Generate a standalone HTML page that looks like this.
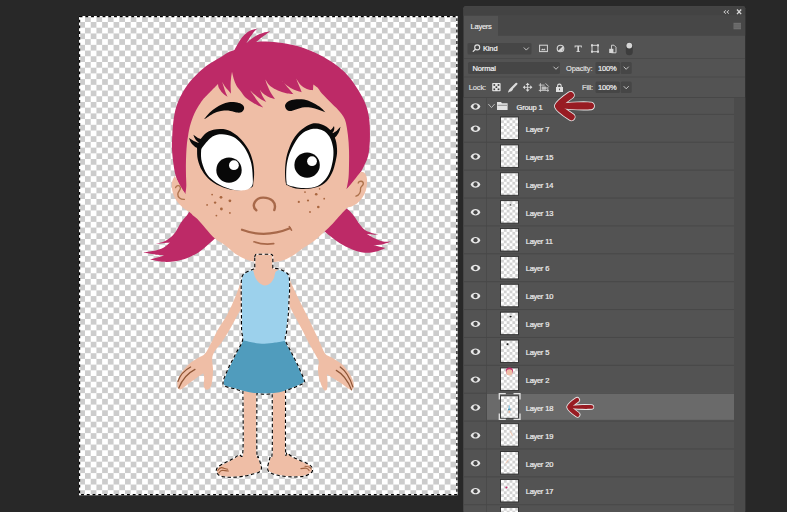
<!DOCTYPE html>
<html><head><meta charset="utf-8">
<style>
html,body{margin:0;padding:0;background:#282828;width:787px;height:512px;overflow:hidden}
svg{display:block}
.t{font-family:"Liberation Sans",sans-serif;stroke:currentColor;stroke-width:0.22px}
</style></head><body>
<svg width="787" height="512" viewBox="0 0 787 512">
<defs>
<pattern id="chk" x="79.3" y="16.3" width="11.42" height="11.42" patternUnits="userSpaceOnUse">
<rect width="11.42" height="11.42" fill="#fff"/>
<rect x="5.71" y="0" width="5.71" height="5.71" fill="#cccccc"/>
<rect x="0" y="5.71" width="5.71" height="5.71" fill="#cccccc"/>
</pattern>
<pattern id="tchk" x="500.5" y="1" width="6.8" height="6.8" patternUnits="userSpaceOnUse">
<rect width="6.8" height="6.8" fill="#fff"/>
<rect x="3.4" width="3.4" height="3.4" fill="#d4d4d4"/>
<rect y="3.4" width="3.4" height="3.4" fill="#d4d4d4"/>
</pattern>
</defs>
<rect width="787" height="512" fill="#282828"/>
<rect x="79" y="16" width="378.5" height="479" fill="url(#chk)"/>
<rect x="79.6" y="16.6" width="377.3" height="478.1" fill="none" stroke="#fff" stroke-width="1.2"/>
<rect x="79.6" y="16.6" width="377.3" height="478.1" fill="none" stroke="#000" stroke-width="1.2" stroke-dasharray="2.87 2.87"/>

<path d="M191.50,212.00 C188.47,210.92 188.55,213.73 186.80,215.50 C185.05,217.27 182.75,220.05 181.00,222.60 C179.25,225.15 177.87,228.47 176.30,230.80 C174.73,233.13 173.55,234.85 171.60,236.60 C169.65,238.35 167.33,240.03 164.60,241.30 C161.87,242.57 156.77,243.72 155.20,244.20 C157.65,243.92 167.45,242.78 169.90,242.50 C168.82,243.37 166.05,246.33 163.40,247.70 C160.75,249.07 157.32,249.92 154.00,250.70 C150.68,251.48 145.25,252.12 143.50,252.40 C145.85,252.80 154.18,254.30 157.60,254.80 C161.02,255.30 162.93,255.30 164.00,255.40 C162.73,255.78 158.73,257.03 156.40,257.70 C154.07,258.37 151.07,259.12 150.00,259.40 C152.23,259.80 159.22,261.50 163.40,261.80 C167.58,262.10 171.20,261.78 175.10,261.20 C179.00,260.62 182.90,259.77 186.80,258.30 C190.70,256.83 194.98,254.65 198.50,252.40 C202.02,250.15 204.98,247.28 207.90,244.80 C210.82,242.32 214.65,238.72 216.00,237.50 C214.17,234.92 206.83,224.58 205.00,222.00 C202.75,220.33 194.53,213.08 191.50,212.00Z" fill="#bd2a67"/>
<path d="M344.60,207.00 C345.57,207.78 348.65,209.93 350.40,211.70 C352.15,213.47 353.53,215.45 355.10,217.60 C356.67,219.75 358.03,222.47 359.80,224.60 C361.57,226.73 362.58,228.65 365.70,230.40 C368.82,232.15 376.37,234.32 378.50,235.10 C376.55,234.92 368.75,234.18 366.80,234.00 C368.17,234.77 372.27,237.33 375.00,238.60 C377.73,239.87 380.47,241.10 383.20,241.60 C385.93,242.10 390.03,241.60 391.40,241.60 C389.85,242.08 385.12,243.92 382.10,244.50 C379.08,245.08 374.77,245.00 373.30,245.10 C374.37,245.38 377.65,246.32 379.70,246.80 C381.75,247.28 384.62,247.80 385.60,248.00 C384.03,248.58 379.72,250.72 376.20,251.50 C372.68,252.28 368.60,253.08 364.50,252.70 C360.40,252.32 355.70,250.77 351.60,249.20 C347.50,247.63 343.42,245.45 339.90,243.30 C336.38,241.15 333.23,238.43 330.50,236.30 C327.77,234.17 324.67,231.47 323.50,230.50 C325.42,227.92 333.08,217.58 335.00,215.00 C336.60,213.67 343.00,208.33 344.60,207.00Z" fill="#bd2a67"/>
<path d="M185.40,194.00 C184.50,192.75 181.61,189.54 180.00,186.50 C178.39,183.46 176.82,179.33 175.75,175.75 C174.68,172.17 174.22,169.29 173.60,165.00 C172.97,160.71 172.25,154.33 172.00,150.00 C171.75,145.67 171.88,143.67 172.10,139.00 C172.32,134.33 172.57,127.50 173.30,122.00 C174.03,116.50 174.76,111.23 176.50,106.00 C178.24,100.77 180.98,95.25 183.75,90.60 C186.52,85.95 189.46,82.13 193.10,78.10 C196.74,74.07 201.17,69.78 205.60,66.40 C210.03,63.02 215.97,60.12 219.70,57.80 C223.43,55.48 225.55,53.80 228.00,52.50 C230.45,51.20 233.33,50.42 234.40,50.00 C234.82,49.27 235.95,47.28 236.90,45.60 C237.85,43.92 238.83,41.70 240.10,39.90 C241.37,38.10 242.92,36.28 244.50,34.80 C246.08,33.32 247.43,32.07 249.60,31.00 C251.77,29.93 256.18,28.83 257.50,28.40 C257.03,28.83 255.80,29.72 254.70,31.00 C253.60,32.28 252.28,34.08 250.90,36.10 C249.52,38.12 247.15,41.93 246.40,43.10 C247.15,42.45 249.20,40.48 250.90,39.20 C252.60,37.92 254.60,36.45 256.60,35.40 C258.60,34.35 260.63,33.58 262.90,32.90 C265.17,32.22 268.98,31.57 270.20,31.30 C269.42,31.88 267.03,33.68 265.50,34.80 C263.97,35.92 262.53,36.78 261.00,38.00 C259.47,39.22 257.08,41.42 256.30,42.10 C257.40,42.00 259.28,41.45 262.90,41.50 C266.52,41.55 272.55,41.72 278.00,42.40 C283.45,43.08 290.06,44.15 295.60,45.60 C301.14,47.05 306.03,48.88 311.25,51.10 C316.47,53.32 322.21,56.17 326.90,58.90 C331.59,61.63 335.50,64.25 339.40,67.50 C343.30,70.75 346.92,74.23 350.30,78.40 C353.68,82.57 357.10,88.07 359.70,92.50 C362.30,96.93 364.30,100.50 365.90,105.00 C367.50,109.50 368.63,113.83 369.30,119.50 C369.97,125.17 370.05,133.13 369.90,139.00 C369.75,144.87 369.38,150.20 368.40,154.70 C367.42,159.20 365.90,162.12 364.00,166.00 C362.10,169.88 359.92,174.07 357.00,178.00 C354.08,181.93 348.25,187.67 346.50,189.60 C338.75,191.33 307.75,198.27 300.00,200.00 C290.00,200.00 250.00,200.00 240.00,200.00 C230.90,199.00 194.50,195.00 185.40,194.00Z" fill="#bd2a67"/>
<path d="M244.00,272.00 C243.73,272.92 243.72,273.67 242.40,277.50 C241.08,281.33 238.62,288.83 236.10,295.00 C233.58,301.17 230.37,308.67 227.30,314.50 C224.23,320.33 220.48,325.07 217.70,330.00 C214.92,334.93 212.68,340.20 210.60,344.10 C208.52,348.00 207.23,351.13 205.20,353.40 C203.17,355.67 200.68,356.25 198.40,357.70 C196.12,359.15 193.78,360.32 191.50,362.10 C189.22,363.88 186.65,366.20 184.70,368.40 C182.75,370.60 181.02,373.02 179.80,375.30 C178.58,377.58 177.72,379.98 177.40,382.10 C177.08,384.22 177.33,386.78 177.90,388.00 C178.47,389.22 179.50,389.73 180.80,389.40 C182.10,389.07 183.92,387.30 185.70,386.00 C187.48,384.70 189.55,383.07 191.50,381.60 C193.45,380.13 195.43,378.58 197.40,377.20 C199.37,375.82 202.32,373.95 203.30,373.30 C203.45,374.12 204.13,376.25 204.20,378.20 C204.27,380.15 203.53,383.20 203.70,385.00 C203.87,386.80 204.47,388.27 205.20,389.00 C205.93,389.73 207.12,389.90 208.10,389.40 C209.08,388.90 210.37,387.87 211.10,386.00 C211.83,384.13 212.18,380.97 212.50,378.20 C212.82,375.43 213.05,372.75 213.00,369.40 C212.95,366.05 211.82,361.28 212.20,358.10 C212.58,354.92 213.73,352.90 215.30,350.30 C216.87,347.70 219.25,345.88 221.60,342.50 C223.95,339.12 227.42,333.33 229.40,330.00 C231.38,326.67 231.40,326.38 233.50,322.50 C235.60,318.62 240.25,310.45 242.00,306.70 C243.75,302.95 243.67,301.12 244.00,300.00 C244.00,295.33 244.00,276.67 244.00,272.00Z" fill="#efbea6"/>
<path d="M287.00,272.00 C287.50,273.33 288.38,276.17 290.00,280.00 C291.62,283.83 293.95,289.25 296.70,295.00 C299.45,300.75 303.62,308.67 306.50,314.50 C309.38,320.33 311.83,325.47 314.00,330.00 C316.17,334.53 317.67,337.80 319.50,341.70 C321.33,345.60 323.04,350.80 325.00,353.40 C326.96,356.00 328.75,355.73 331.25,357.30 C333.75,358.87 337.86,361.27 340.00,362.80 C342.14,364.33 342.43,364.58 344.10,366.50 C345.77,368.42 348.45,371.70 350.00,374.30 C351.55,376.90 352.83,379.82 353.40,382.10 C353.97,384.38 353.80,386.70 353.40,388.00 C353.00,389.30 352.22,390.07 351.00,389.90 C349.78,389.73 348.06,388.30 346.10,387.00 C344.14,385.70 341.70,383.73 339.25,382.10 C336.80,380.47 333.44,378.50 331.40,377.20 C329.36,375.90 327.73,374.78 327.00,374.30 C327.08,375.60 327.50,379.65 327.50,382.10 C327.50,384.55 327.48,387.62 327.00,389.00 C326.52,390.38 325.48,390.90 324.60,390.40 C323.72,389.90 322.68,388.36 321.70,386.00 C320.72,383.64 319.32,379.25 318.70,376.25 C318.08,373.25 317.99,370.50 318.00,368.00 C318.01,365.50 319.15,363.42 318.75,361.25 C318.35,359.08 317.16,357.86 315.60,355.00 C314.04,352.14 311.62,348.27 309.40,344.10 C307.18,339.93 304.25,333.78 302.30,330.00 C300.35,326.22 299.77,325.28 297.70,321.40 C295.63,317.52 291.52,310.27 289.90,306.70 C288.28,303.13 288.32,301.12 288.00,300.00 C287.83,295.33 287.17,276.67 287.00,272.00Z" fill="#efbea6"/>
<path d="M243.30,385.00 C245.50,385.00 254.30,385.00 256.50,385.00 C256.55,396.13 256.58,439.87 256.80,451.80 C257.02,463.73 257.30,454.77 257.80,456.60 C258.30,458.43 259.28,460.87 259.80,462.80 C260.32,464.73 261.12,466.72 260.90,468.20 C260.68,469.68 260.38,470.67 258.50,471.70 C256.62,472.73 252.80,473.62 249.60,474.40 C246.40,475.18 242.72,476.00 239.30,476.40 C235.88,476.80 232.17,476.91 229.10,476.80 C226.03,476.69 222.83,476.38 220.90,475.75 C218.97,475.12 218.18,473.91 217.50,473.00 C216.82,472.09 216.68,471.20 216.80,470.30 C216.92,469.40 217.29,468.52 218.20,467.60 C219.11,466.68 220.67,465.72 222.25,464.80 C223.83,463.88 225.76,463.12 227.70,462.10 C229.64,461.08 231.97,459.84 233.90,458.70 C235.83,457.56 237.73,456.50 239.30,455.25 C240.87,454.00 242.63,462.91 243.30,451.20 C243.97,439.49 243.30,396.03 243.30,385.00Z" fill="#efbea6"/>
<path d="M272.70,385.00 C274.78,385.00 283.12,385.00 285.20,385.00 C285.20,395.92 284.87,439.13 285.20,450.50 C285.53,461.87 285.95,452.07 287.20,453.20 C288.45,454.33 290.53,456.05 292.70,457.30 C294.87,458.55 297.92,459.67 300.20,460.70 C302.48,461.73 304.57,462.47 306.40,463.50 C308.23,464.53 310.30,465.65 311.20,466.90 C312.10,468.15 312.27,469.82 311.80,471.00 C311.33,472.18 310.10,473.15 308.40,474.00 C306.70,474.85 304.45,475.70 301.60,476.10 C298.75,476.50 294.72,476.52 291.30,476.40 C287.88,476.28 283.94,475.85 281.10,475.40 C278.26,474.95 276.25,474.43 274.25,473.70 C272.25,472.97 270.12,472.02 269.10,471.00 C268.08,469.98 268.10,468.97 268.10,467.60 C268.10,466.23 268.65,464.63 269.10,462.80 C269.55,460.97 270.23,458.53 270.80,456.60 C271.37,454.67 272.18,463.13 272.50,451.20 C272.82,439.27 272.67,396.03 272.70,385.00Z" fill="#efbea6"/>
<path d="M251.50,292.00 C251.58,288.42 251.92,274.08 252.00,270.50 C252.38,269.92 253.83,268.42 254.30,267.00 C254.77,265.58 254.72,263.67 254.80,262.00 C254.88,260.33 254.68,258.17 254.80,257.00 C254.92,255.83 255.05,255.45 255.50,255.00 C255.95,254.55 255.03,254.42 257.50,254.30 C259.97,254.18 267.85,254.18 270.30,254.30 C272.75,254.42 271.78,254.55 272.20,255.00 C272.62,255.45 272.70,255.83 272.80,257.00 C272.90,258.17 272.70,260.33 272.80,262.00 C272.90,263.67 272.37,265.58 273.40,267.00 C274.43,268.42 278.07,269.92 279.00,270.50 C279.08,274.08 279.42,288.42 279.50,292.00 C274.83,292.00 256.17,292.00 251.50,292.00Z" fill="#efbea6"/>
<path d="M185.40,194.00 C185.55,192.67 186.20,189.00 186.30,186.00 C186.40,183.00 186.07,179.50 186.00,176.00 C185.93,172.50 185.87,168.67 185.90,165.00 C185.93,161.33 186.03,157.50 186.20,154.00 C186.37,150.50 186.57,147.17 186.90,144.00 C187.23,140.83 187.80,137.50 188.20,135.00 C188.60,132.50 188.75,131.32 189.30,129.00 C189.85,126.68 190.65,123.68 191.50,121.10 C192.35,118.52 193.33,115.85 194.40,113.50 C195.47,111.15 196.53,109.25 197.90,107.00 C199.27,104.75 201.08,101.95 202.60,100.00 C204.12,98.05 205.50,96.87 207.00,95.30 C208.50,93.73 209.77,92.47 211.60,90.60 C213.43,88.73 216.93,85.18 218.00,84.10 C218.12,84.68 218.13,86.33 218.70,87.60 C219.27,88.87 220.38,90.45 221.40,91.70 C222.42,92.95 223.77,94.25 224.80,95.10 C225.83,95.95 227.13,96.52 227.60,96.80 C227.25,96.05 226.13,93.95 225.50,92.30 C224.87,90.65 224.37,88.72 223.80,86.90 C223.23,85.08 222.38,82.32 222.10,81.40 C222.55,82.20 223.78,84.72 224.80,86.20 C225.82,87.68 227.17,89.05 228.20,90.30 C229.23,91.55 230.53,93.13 231.00,93.70 C230.93,92.33 230.60,88.00 230.60,85.50 C230.60,83.00 230.77,80.98 231.00,78.70 C231.23,76.42 231.83,72.95 232.00,71.80 C232.28,72.95 232.97,76.42 233.70,78.70 C234.43,80.98 235.27,83.45 236.40,85.50 C237.53,87.55 238.98,88.98 240.50,91.00 C242.02,93.02 243.53,95.72 245.50,97.60 C247.47,99.48 250.13,100.93 252.30,102.30 C254.47,103.67 256.68,104.93 258.50,105.80 C260.32,106.67 262.42,107.22 263.20,107.50 C262.42,106.63 260.08,104.30 258.50,102.30 C256.92,100.30 255.07,97.48 253.70,95.50 C252.33,93.52 250.87,91.25 250.30,90.40 C251.08,91.13 253.30,93.38 255.00,94.80 C256.70,96.22 258.62,97.70 260.50,98.90 C262.38,100.10 265.33,101.48 266.30,102.00 C265.68,101.03 263.52,97.85 262.60,96.20 C261.68,94.55 261.27,93.18 260.80,92.10 C260.33,91.02 259.97,90.10 259.80,89.70 C260.37,90.33 261.72,92.30 263.20,93.50 C264.68,94.70 266.75,96.00 268.70,96.90 C270.65,97.80 273.87,98.57 274.90,98.90 C274.22,97.88 272.07,95.07 270.80,92.80 C269.53,90.53 268.22,87.53 267.30,85.30 C266.38,83.07 265.63,80.38 265.30,79.40 C265.98,80.38 267.92,83.75 269.40,85.30 C270.88,86.85 272.13,87.60 274.20,88.70 C276.27,89.80 279.38,91.08 281.80,91.90 C284.22,92.72 286.75,93.20 288.70,93.60 C290.65,94.00 292.70,94.18 293.50,94.30 C292.70,93.33 290.07,90.15 288.70,88.50 C287.33,86.85 286.45,85.67 285.30,84.40 C284.15,83.13 282.38,81.48 281.80,80.90 C282.72,81.70 285.25,84.22 287.30,85.70 C289.35,87.18 291.70,88.72 294.10,89.80 C296.50,90.88 300.43,91.80 301.70,92.20 C301.35,91.35 300.28,88.75 299.60,87.10 C298.92,85.45 298.17,83.73 297.60,82.30 C297.03,80.87 296.43,79.13 296.20,78.50 C296.77,79.37 298.23,82.15 299.60,83.70 C300.97,85.25 302.80,86.78 304.40,87.80 C306.00,88.82 307.77,89.40 309.20,89.80 C310.63,90.20 312.37,90.13 313.00,90.20 C313.05,89.23 313.25,85.37 313.30,84.40 C314.00,84.93 316.07,86.08 317.50,87.60 C318.93,89.12 319.65,90.98 321.90,93.50 C324.15,96.02 328.28,99.95 331.00,102.70 C333.72,105.45 335.88,107.20 338.20,110.00 C340.52,112.80 343.28,115.33 344.90,119.50 C346.52,123.67 347.22,129.92 347.90,135.00 C348.58,140.08 348.82,145.00 349.00,150.00 C349.18,155.00 349.08,160.33 349.00,165.00 C348.92,169.67 348.92,173.90 348.50,178.00 C348.08,182.10 346.83,187.67 346.50,189.60 C348.88,186.63 358.42,174.77 360.80,171.80 C361.43,171.98 363.62,172.00 364.60,172.90 C365.58,173.80 366.30,175.40 366.70,177.20 C367.10,179.00 367.18,181.37 367.00,183.70 C366.82,186.03 366.37,188.88 365.60,191.20 C364.83,193.52 363.73,195.63 362.40,197.60 C361.07,199.57 359.30,201.57 357.60,203.00 C355.90,204.43 353.82,205.48 352.20,206.20 C350.58,206.92 348.62,207.12 347.90,207.30 C346.73,208.50 343.40,211.82 340.90,214.50 C338.40,217.18 335.83,220.35 332.90,223.40 C329.97,226.45 326.45,229.87 323.30,232.80 C320.15,235.73 317.32,238.47 314.00,241.00 C310.68,243.53 307.12,245.45 303.40,248.00 C299.68,250.55 295.60,254.10 291.70,256.30 C287.80,258.50 284.70,260.17 280.00,261.20 C275.30,262.23 268.37,262.53 263.50,262.50 C258.63,262.47 255.03,262.15 250.80,261.00 C246.57,259.85 242.33,258.20 238.10,255.60 C233.87,253.00 229.27,248.27 225.40,245.40 C221.53,242.53 218.20,241.23 214.90,238.40 C211.60,235.57 208.52,231.63 205.60,228.40 C202.68,225.17 199.50,221.15 197.40,219.00 C195.30,216.85 193.73,216.08 193.00,215.50 C192.45,214.97 191.32,213.55 189.70,212.30 C188.08,211.05 185.27,209.62 183.30,208.00 C181.33,206.38 179.43,204.57 177.90,202.60 C176.37,200.63 175.08,198.52 174.10,196.20 C173.12,193.88 172.35,191.03 172.00,188.70 C171.65,186.37 171.55,184.36 172.00,182.20 C172.45,180.04 174.25,176.82 174.70,175.75 C175.25,176.71 176.82,179.41 178.00,181.50 C179.18,183.59 180.57,186.22 181.80,188.30 C183.03,190.38 184.80,193.05 185.40,194.00Z" fill="#efbea6"/>
<path d="M242.30,274.50 C243.08,273.95 245.30,271.97 247.00,271.20 C248.70,270.43 251.58,270.12 252.50,269.90 C252.67,270.17 253.05,270.27 253.50,271.50 C253.95,272.73 254.27,275.42 255.20,277.30 C256.13,279.18 257.53,281.43 259.10,282.80 C260.67,284.17 262.78,285.37 264.60,285.50 C266.42,285.63 268.45,284.83 270.00,283.60 C271.55,282.37 272.98,280.03 273.90,278.10 C274.82,276.17 274.72,273.37 275.50,272.00 C276.28,270.63 278.08,270.25 278.60,269.90 C279.65,270.18 283.27,270.83 284.90,271.60 C286.53,272.37 287.68,272.63 288.40,274.50 C289.12,276.37 289.10,278.55 289.20,282.80 C289.30,287.05 289.15,294.67 289.00,300.00 C288.85,305.33 288.70,309.57 288.30,314.80 C287.90,320.03 287.02,326.37 286.60,331.40 C286.18,336.43 285.93,342.73 285.80,345.00 C282.23,345.33 267.97,346.67 264.40,347.00 C260.75,346.67 246.15,345.33 242.50,345.00 C242.42,342.50 242.12,335.83 242.00,330.00 C241.88,324.17 241.87,316.67 241.80,310.00 C241.73,303.33 241.58,295.32 241.60,290.00 C241.62,284.68 241.78,280.68 241.90,278.10 C242.02,275.52 242.23,275.10 242.30,274.50Z" fill="#9cd1ec"/>
<path d="M243.30,340.25 C244.92,340.64 249.48,342.01 253.00,342.60 C256.52,343.19 260.73,343.80 264.40,343.80 C268.07,343.80 271.57,343.08 275.00,342.60 C278.43,342.12 283.33,341.18 285.00,340.90 C286.13,342.95 289.53,348.87 291.80,353.20 C294.07,357.53 296.63,362.68 298.60,366.90 C300.57,371.12 302.83,375.90 303.60,378.50 C304.37,381.10 304.95,381.02 303.20,382.50 C301.45,383.98 297.05,385.78 293.10,387.40 C289.15,389.02 284.28,391.18 279.50,392.20 C274.72,393.22 268.95,393.40 264.40,393.50 C259.85,393.60 256.97,393.59 252.20,392.80 C247.43,392.01 240.33,389.97 235.80,388.75 C231.27,387.53 227.00,386.79 225.00,385.50 C223.00,384.21 223.15,383.88 223.80,381.00 C224.45,378.12 226.90,372.65 228.90,368.25 C230.90,363.85 233.40,359.27 235.80,354.60 C238.20,349.93 242.05,342.64 243.30,340.25Z" fill="#509cbd"/>

<path d="M175.6,187.6 C176.2,185.2 179.8,184.8 180.4,187.6 C180.8,189.8 178.2,191.4 177.8,194 C177.6,197.2 180.5,199.6 184.4,199.4" fill="none" stroke="#ad714b" stroke-width="1.35" stroke-linecap="round"/>
<path d="M358.2,183 C359,180.5 363.5,180.5 363.3,183.8 C363,186 360.2,186.2 360.5,189 C360.8,191.5 359.5,195 356,196.2" fill="none" stroke="#ad714b" stroke-width="1.35" stroke-linecap="round"/>
<path d="M177.9,381.5 C180,375 185,370 190.6,367" fill="none" stroke="#8e5535" stroke-width="1.2" stroke-linecap="round"/>
<path d="M178.8,388 C182,380 188,373 195,369.4" fill="none" stroke="#8e5535" stroke-width="1.2" stroke-linecap="round"/>
<path d="M352.9,387 C350,378 346,371 340.2,367" fill="none" stroke="#8e5535" stroke-width="1.2" stroke-linecap="round"/>
<path d="M351.5,389.9 C348,381 343,374 336.3,370.4" fill="none" stroke="#8e5535" stroke-width="1.2" stroke-linecap="round"/>
<path d="M217.8,470.6 C219,468.5 220.5,467.5 221.6,467.6 C223.5,467.8 225.5,469 227.7,469.3" fill="none" stroke="#a0603c" stroke-width="1.1" stroke-linecap="round"/>
<path d="M218.8,473 C220,471.3 221,470.4 222.25,470.3 C224,470.3 226,470.9 228.4,471" fill="none" stroke="#a0603c" stroke-width="1.1" stroke-linecap="round"/>
<path d="M300.9,468.6 C303,468.2 305,468 306.4,468.2 C307.8,468.6 308.6,469.5 309.1,470.6" fill="none" stroke="#a0603c" stroke-width="1.1" stroke-linecap="round"/>
<path d="M305,466.2 C307,466.4 308.6,466.8 309.8,467.2 C310.6,467.7 311,468.3 311.2,468.9" fill="none" stroke="#a0603c" stroke-width="1.1" stroke-linecap="round"/>
<circle cx="212.1" cy="194.6" r="0.9" fill="#a9663f"/><circle cx="221" cy="197.3" r="1.4" fill="#a9663f"/><circle cx="229.9" cy="200.8" r="1.4" fill="#a9663f"/><circle cx="215.1" cy="202.6" r="1.2" fill="#a9663f"/><circle cx="207.1" cy="204.9" r="0.9" fill="#a9663f"/><circle cx="221.4" cy="209" r="1.4" fill="#a9663f"/><circle cx="229.9" cy="212.9" r="0.9" fill="#a9663f"/><circle cx="216.4" cy="215.6" r="0.9" fill="#a9663f"/><circle cx="305" cy="192.1" r="0.9" fill="#a9663f"/><circle cx="319.6" cy="188.9" r="0.8" fill="#a9663f"/><circle cx="316.2" cy="194.2" r="1.3" fill="#a9663f"/><circle cx="298.8" cy="201.9" r="1.1" fill="#a9663f"/><circle cx="308" cy="200.5" r="1.1" fill="#a9663f"/><circle cx="324.2" cy="198.7" r="0.9" fill="#a9663f"/><circle cx="318.3" cy="207" r="1.3" fill="#a9663f"/><circle cx="310" cy="212" r="0.9" fill="#a9663f"/>
<path d="M256.3,210.2 C251,206 255,197.8 263,197.6 C271,197.5 277,202.5 274.3,210" fill="none" stroke="#a8694a" stroke-width="2.4" stroke-linecap="round"/>
<path d="M242,229.8 Q265,238.6 290,228.3" fill="none" stroke="#a8694a" stroke-width="2.3" stroke-linecap="round"/><path d="M289.3,226.6 L291.5,230.2" fill="none" stroke="#a8694a" stroke-width="1.6" stroke-linecap="round"/>
<path d="M254,241.8 Q263.5,245 273.7,243.6" fill="none" stroke="#a8694a" stroke-width="1.7" stroke-linecap="round"/>
<path d="M204.10,119.10 C205.00,118.05 207.53,114.70 209.50,112.80 C211.47,110.90 213.78,109.13 215.90,107.70 C218.02,106.27 220.08,105.10 222.20,104.20 C224.32,103.30 226.37,102.62 228.60,102.30 C230.83,101.98 233.48,102.03 235.60,102.30 C237.72,102.57 239.93,103.22 241.30,103.90 C242.67,104.58 243.38,105.45 243.80,106.40 C244.22,107.35 244.22,108.63 243.80,109.60 C243.38,110.57 242.47,111.72 241.30,112.20 C240.13,112.68 238.60,112.72 236.80,112.50 C235.00,112.28 232.62,111.22 230.50,110.90 C228.38,110.58 226.22,110.45 224.10,110.60 C221.98,110.75 219.92,111.12 217.80,111.80 C215.68,112.48 213.30,113.68 211.40,114.70 C209.50,115.72 207.62,117.17 206.40,117.90 C205.18,118.63 204.48,118.90 204.10,119.10Z" fill="#0a0a0a"/>
<path d="M325.40,112.30 C324.62,111.98 322.45,111.03 320.70,110.40 C318.95,109.77 316.92,109.03 314.90,108.50 C312.88,107.97 310.72,107.35 308.60,107.20 C306.48,107.05 304.32,107.22 302.20,107.60 C300.08,107.98 297.90,108.92 295.90,109.50 C293.90,110.08 291.68,111.00 290.20,111.10 C288.72,111.20 287.85,110.85 287.00,110.10 C286.15,109.35 285.27,107.72 285.10,106.60 C284.93,105.48 285.15,104.40 286.00,103.40 C286.85,102.40 288.45,101.28 290.20,100.60 C291.95,99.92 294.18,99.47 296.50,99.30 C298.82,99.13 301.55,99.12 304.10,99.60 C306.65,100.08 309.25,101.03 311.80,102.20 C314.35,103.37 317.13,104.92 319.40,106.60 C321.67,108.28 324.40,111.35 325.40,112.30Z" fill="#0a0a0a"/>
<path d="M197.80,143.90 C199.10,141.33 202.32,136.45 204.90,134.10 C207.48,131.75 210.25,130.63 213.30,129.80 C216.35,128.97 219.92,128.62 223.20,129.10 C226.48,129.58 229.97,130.93 233.00,132.70 C236.03,134.47 238.82,136.90 241.40,139.70 C243.98,142.50 246.62,145.98 248.50,149.50 C250.38,153.02 251.77,157.05 252.70,160.80 C253.63,164.55 253.98,168.48 254.10,172.00 C254.22,175.52 253.87,179.32 253.40,181.90 C252.93,184.48 254.00,186.10 251.30,187.50 C248.60,188.90 241.88,190.30 237.20,190.30 C232.52,190.30 227.65,189.13 223.20,187.50 C218.75,185.87 214.02,183.32 210.50,180.50 C206.98,177.68 204.22,174.12 202.10,170.60 C199.98,167.08 198.63,162.92 197.80,159.40 C196.97,155.88 197.10,152.08 197.10,149.50 C197.10,146.92 196.50,146.47 197.80,143.90Z" fill="#0a0a0a"/>
<path d="M203.20,146.30 C205.10,143.85 209.37,138.60 212.50,136.60 C215.63,134.60 218.58,134.27 222.00,134.30 C225.42,134.33 229.80,135.27 233.00,136.80 C236.20,138.33 238.85,140.92 241.20,143.50 C243.55,146.08 245.42,148.95 247.10,152.30 C248.78,155.65 250.37,159.60 251.30,163.60 C252.23,167.60 252.58,172.55 252.70,176.30 C252.82,180.05 253.40,183.77 252.00,186.10 C250.60,188.43 247.93,189.83 244.30,190.30 C240.67,190.77 234.82,190.12 230.20,188.90 C225.58,187.68 220.43,185.38 216.60,183.00 C212.77,180.62 209.65,178.07 207.20,174.60 C204.75,171.13 202.92,166.08 201.90,162.20 C200.88,158.32 200.88,153.95 201.10,151.30 C201.32,148.65 201.30,148.75 203.20,146.30Z" fill="#fff"/>
<path d="M285.80,183.00 C285.20,180.12 284.87,173.42 285.10,168.60 C285.33,163.78 285.88,158.92 287.20,154.10 C288.52,149.28 290.58,143.78 293.00,139.70 C295.42,135.62 298.57,132.25 301.70,129.60 C304.83,126.95 308.43,124.65 311.80,123.80 C315.17,122.95 318.77,123.42 321.90,124.50 C325.03,125.58 328.32,127.77 330.60,130.30 C332.88,132.83 334.52,136.22 335.60,139.70 C336.68,143.18 337.10,147.58 337.10,151.20 C337.10,154.82 336.45,157.78 335.60,161.40 C334.75,165.02 333.80,169.30 332.00,172.90 C330.20,176.50 327.93,180.47 324.80,183.00 C321.67,185.53 317.53,187.13 313.20,188.10 C308.87,189.07 302.88,189.17 298.80,188.80 C294.72,188.43 290.87,186.87 288.70,185.90 C286.53,184.93 286.40,185.88 285.80,183.00Z" fill="#0a0a0a"/>
<path d="M286.50,181.60 C286.13,178.58 286.02,171.68 286.50,167.10 C286.98,162.52 287.83,158.43 289.40,154.10 C290.97,149.77 293.62,144.65 295.90,141.10 C298.18,137.55 300.22,134.85 303.10,132.80 C305.98,130.75 309.92,129.20 313.20,128.80 C316.48,128.40 320.10,129.13 322.80,130.40 C325.50,131.67 327.73,133.80 329.40,136.40 C331.07,139.00 332.13,142.80 332.80,146.00 C333.47,149.20 333.63,152.10 333.40,155.60 C333.17,159.10 332.47,163.40 331.40,167.00 C330.33,170.60 329.30,174.05 327.00,177.20 C324.70,180.35 321.58,184.08 317.60,185.90 C313.62,187.72 307.92,188.22 303.10,188.10 C298.28,187.98 291.47,186.28 288.70,185.20 C285.93,184.12 286.87,184.62 286.50,181.60Z" fill="#fff"/>
<path d="M197.8,148.2 Q191.2,145.8 189,138 Q194,141.6 199.2,143.3 Z M199.8,143.2 Q194.6,140.2 193.4,134.8 Q197.6,138.6 202.3,139.6 Z" fill="#0a0a0a"/>
<path d="M334.2,138.2 Q339.5,134 340.5,126.8 Q337,131.5 332,133.8 Z M331.6,133.6 Q335.4,130.4 334,126 Q332.3,129.8 328.6,131.2 Z" fill="#0a0a0a"/>
<circle cx="229" cy="170.1" r="12.7" fill="#080808"/><circle cx="233.9" cy="165.2" r="4.9" fill="#fff"/>
<circle cx="307.1" cy="165.1" r="12.7" fill="#080808"/><circle cx="312" cy="161.2" r="4.9" fill="#fff"/>

<path d="M254.80,257.00 C254.92,254.71 255.05,255.45 255.50,255.00 C255.95,254.55 255.03,254.42 257.50,254.30 C259.97,254.18 267.85,254.18 270.30,254.30 C272.75,254.42 271.78,254.55 272.20,255.00 C272.62,255.45 272.70,254.83 272.80,257.00 C272.90,259.17 272.80,266.17 272.80,268.00 C274.03,268.25 277.93,268.72 280.20,269.50 C282.47,270.28 284.90,271.40 286.40,272.70 C287.90,274.00 288.67,274.42 289.20,277.30 C289.73,280.18 289.63,286.22 289.60,290.00 C289.57,293.78 289.22,295.87 289.00,300.00 C288.78,304.13 288.70,309.57 288.30,314.80 C287.90,320.03 287.07,327.15 286.60,331.40 C286.13,335.65 284.63,336.67 285.50,340.30 C286.37,343.93 289.62,348.77 291.80,353.20 C293.98,357.63 296.52,362.38 298.60,366.90 C300.68,371.42 303.53,377.57 304.30,380.30 C305.07,383.03 305.07,382.02 303.20,383.30 C301.33,384.58 296.03,386.80 293.10,388.00 C290.17,389.20 286.85,390.08 285.60,390.50 C285.60,400.50 285.33,440.10 285.60,450.50 C285.87,460.90 286.02,451.82 287.20,452.90 C288.38,453.98 290.53,455.75 292.70,457.00 C294.87,458.25 297.88,459.37 300.20,460.40 C302.52,461.43 304.70,462.15 306.60,463.20 C308.50,464.25 310.65,465.37 311.60,466.70 C312.55,468.03 312.80,469.90 312.30,471.20 C311.80,472.50 310.38,473.60 308.60,474.50 C306.82,475.40 304.48,476.20 301.60,476.60 C298.72,477.00 294.72,477.02 291.30,476.90 C287.88,476.78 283.98,476.35 281.10,475.90 C278.22,475.45 276.08,474.97 274.00,474.20 C271.92,473.43 269.67,472.40 268.60,471.30 C267.53,470.20 267.60,469.02 267.60,467.60 C267.60,466.18 268.15,464.63 268.60,462.80 C269.05,460.97 269.70,458.53 270.30,456.60 C270.90,454.67 271.88,461.63 272.20,451.20 C272.52,440.77 272.20,403.53 272.20,394.00 C270.90,394.03 266.95,394.25 264.40,394.20 C261.85,394.15 258.15,393.78 256.90,393.70 C256.90,403.38 256.68,441.32 256.90,451.80 C257.12,462.28 257.63,454.77 258.20,456.60 C258.77,458.43 259.77,460.83 260.30,462.80 C260.83,464.77 261.65,466.83 261.40,468.40 C261.15,469.97 260.75,471.12 258.80,472.20 C256.85,473.28 252.95,474.12 249.70,474.90 C246.45,475.68 242.73,476.50 239.30,476.90 C235.87,477.30 232.20,477.42 229.10,477.30 C226.00,477.18 222.72,476.88 220.70,476.20 C218.68,475.52 217.73,474.20 217.00,473.20 C216.27,472.20 216.15,471.20 216.30,470.20 C216.45,469.20 216.95,468.18 217.90,467.20 C218.85,466.22 220.40,465.23 222.00,464.30 C223.60,463.37 225.55,462.62 227.50,461.60 C229.45,460.58 231.78,459.33 233.70,458.20 C235.62,457.07 237.47,456.00 239.00,454.80 C240.53,453.60 242.25,461.55 242.90,451.00 C243.55,440.45 242.90,401.42 242.90,391.50 C241.72,391.12 238.82,390.12 235.80,389.20 C232.78,388.28 226.88,387.37 224.80,386.00 C222.72,384.63 222.68,384.00 223.30,381.00 C223.92,378.00 226.48,372.43 228.50,368.00 C230.52,363.57 233.07,358.98 235.40,354.40 C237.73,349.82 241.47,344.57 242.50,340.50 C243.53,336.43 241.78,335.08 241.60,330.00 C241.42,324.92 241.47,316.67 241.40,310.00 C241.33,303.33 241.18,295.05 241.20,290.00 C241.22,284.95 241.12,282.33 241.50,279.70 C241.88,277.07 242.13,275.70 243.50,274.20 C244.87,272.70 247.82,271.61 249.70,270.70 C251.58,269.79 253.95,269.07 254.80,268.75 C254.80,266.79 254.68,259.29 254.80,257.00Z" fill="none" stroke="#fff" stroke-width="1"/>
<path d="M254.80,257.00 C254.92,254.71 255.05,255.45 255.50,255.00 C255.95,254.55 255.03,254.42 257.50,254.30 C259.97,254.18 267.85,254.18 270.30,254.30 C272.75,254.42 271.78,254.55 272.20,255.00 C272.62,255.45 272.70,254.83 272.80,257.00 C272.90,259.17 272.80,266.17 272.80,268.00 C274.03,268.25 277.93,268.72 280.20,269.50 C282.47,270.28 284.90,271.40 286.40,272.70 C287.90,274.00 288.67,274.42 289.20,277.30 C289.73,280.18 289.63,286.22 289.60,290.00 C289.57,293.78 289.22,295.87 289.00,300.00 C288.78,304.13 288.70,309.57 288.30,314.80 C287.90,320.03 287.07,327.15 286.60,331.40 C286.13,335.65 284.63,336.67 285.50,340.30 C286.37,343.93 289.62,348.77 291.80,353.20 C293.98,357.63 296.52,362.38 298.60,366.90 C300.68,371.42 303.53,377.57 304.30,380.30 C305.07,383.03 305.07,382.02 303.20,383.30 C301.33,384.58 296.03,386.80 293.10,388.00 C290.17,389.20 286.85,390.08 285.60,390.50 C285.60,400.50 285.33,440.10 285.60,450.50 C285.87,460.90 286.02,451.82 287.20,452.90 C288.38,453.98 290.53,455.75 292.70,457.00 C294.87,458.25 297.88,459.37 300.20,460.40 C302.52,461.43 304.70,462.15 306.60,463.20 C308.50,464.25 310.65,465.37 311.60,466.70 C312.55,468.03 312.80,469.90 312.30,471.20 C311.80,472.50 310.38,473.60 308.60,474.50 C306.82,475.40 304.48,476.20 301.60,476.60 C298.72,477.00 294.72,477.02 291.30,476.90 C287.88,476.78 283.98,476.35 281.10,475.90 C278.22,475.45 276.08,474.97 274.00,474.20 C271.92,473.43 269.67,472.40 268.60,471.30 C267.53,470.20 267.60,469.02 267.60,467.60 C267.60,466.18 268.15,464.63 268.60,462.80 C269.05,460.97 269.70,458.53 270.30,456.60 C270.90,454.67 271.88,461.63 272.20,451.20 C272.52,440.77 272.20,403.53 272.20,394.00 C270.90,394.03 266.95,394.25 264.40,394.20 C261.85,394.15 258.15,393.78 256.90,393.70 C256.90,403.38 256.68,441.32 256.90,451.80 C257.12,462.28 257.63,454.77 258.20,456.60 C258.77,458.43 259.77,460.83 260.30,462.80 C260.83,464.77 261.65,466.83 261.40,468.40 C261.15,469.97 260.75,471.12 258.80,472.20 C256.85,473.28 252.95,474.12 249.70,474.90 C246.45,475.68 242.73,476.50 239.30,476.90 C235.87,477.30 232.20,477.42 229.10,477.30 C226.00,477.18 222.72,476.88 220.70,476.20 C218.68,475.52 217.73,474.20 217.00,473.20 C216.27,472.20 216.15,471.20 216.30,470.20 C216.45,469.20 216.95,468.18 217.90,467.20 C218.85,466.22 220.40,465.23 222.00,464.30 C223.60,463.37 225.55,462.62 227.50,461.60 C229.45,460.58 231.78,459.33 233.70,458.20 C235.62,457.07 237.47,456.00 239.00,454.80 C240.53,453.60 242.25,461.55 242.90,451.00 C243.55,440.45 242.90,401.42 242.90,391.50 C241.72,391.12 238.82,390.12 235.80,389.20 C232.78,388.28 226.88,387.37 224.80,386.00 C222.72,384.63 222.68,384.00 223.30,381.00 C223.92,378.00 226.48,372.43 228.50,368.00 C230.52,363.57 233.07,358.98 235.40,354.40 C237.73,349.82 241.47,344.57 242.50,340.50 C243.53,336.43 241.78,335.08 241.60,330.00 C241.42,324.92 241.47,316.67 241.40,310.00 C241.33,303.33 241.18,295.05 241.20,290.00 C241.22,284.95 241.12,282.33 241.50,279.70 C241.88,277.07 242.13,275.70 243.50,274.20 C244.87,272.70 247.82,271.61 249.70,270.70 C251.58,269.79 253.95,269.07 254.80,268.75 C254.80,266.79 254.68,259.29 254.80,257.00Z" fill="none" stroke="#000" stroke-width="1.1" stroke-dasharray="3.4 2.5"/>

<rect x="463.5" y="6.2" width="281.7" height="506" rx="2" fill="#535353"/>
<path d="M463.5,15.8 V8.2 a2,2 0 0 1 2,-2 H743.2 a2,2 0 0 1 2,2 V15.8 Z" fill="#434343"/>
<rect x="498" y="15.8" width="247.2" height="19.9" fill="#474747"/>
<text x="470.6" y="28.6" class="t" font-size="7.6" letter-spacing="-0.3" fill="#f2f2f2" color="#f2f2f2" style="stroke-width:0.12px">Layers</text>
<rect x="467.5" y="43" width="64" height="11.5" rx="1.5" fill="#464646"/>
<text x="483" y="51.3" class="t" font-size="7.5" letter-spacing="-0.15" fill="#eee" color="#eee">Kind</text>
<line x1="464" y1="58.5" x2="745" y2="58.5" stroke="#4a4a4a" stroke-width="1"/>
<rect x="468" y="62" width="92" height="12" rx="1.5" fill="#464646"/>
<text x="472.5" y="70.7" class="t" font-size="7.5" letter-spacing="-0.15" fill="#eee" color="#eee">Normal</text>
<text x="566" y="70.7" class="t" font-size="7.5" letter-spacing="-0.15" fill="#ddd" color="#ddd">Opacity:</text>
<rect x="595.5" y="62" width="24.5" height="12" rx="1.5" fill="#464646"/>
<rect x="620.7" y="62" width="11" height="12" rx="1.5" fill="#464646"/>
<text x="598" y="70.7" class="t" font-size="7.5" letter-spacing="-0.15" fill="#eee" color="#eee">100%</text>
<line x1="464" y1="77" x2="745" y2="77" stroke="#4a4a4a" stroke-width="1"/>
<text x="468.8" y="89.7" class="t" font-size="7.5" letter-spacing="-0.15" fill="#ddd" color="#ddd">Lock:</text>
<text x="582" y="89.7" class="t" font-size="7.5" letter-spacing="-0.15" fill="#ddd" color="#ddd">Fill:</text>
<rect x="595.5" y="81.5" width="24.5" height="11.5" rx="1.5" fill="#464646"/>
<rect x="620.7" y="81.5" width="11" height="11.5" rx="1.5" fill="#464646"/>
<text x="598" y="89.9" class="t" font-size="7.5" letter-spacing="-0.15" fill="#eee" color="#eee">100%</text>
<path d="M523.8,47.5 L526.3,50.099999999999994 L528.8,47.5" fill="none" stroke="#cfcfcf" stroke-width="0.9"/>
<path d="M553.5,66.7 L556,69.3 L558.5,66.7" fill="none" stroke="#cfcfcf" stroke-width="0.9"/>
<path d="M623.7,66.7 L626.2,69.3 L628.7,66.7" fill="none" stroke="#cfcfcf" stroke-width="0.9"/>
<path d="M623.7,86.2 L626.2,88.8 L628.7,86.2" fill="none" stroke="#cfcfcf" stroke-width="0.9"/>
<rect x="463.5" y="97.5" width="270.5" height="415" fill="#535353"/>
<rect x="734" y="97.5" width="11.2" height="415" fill="#4b4b4b"/>
<line x1="464" y1="97.5" x2="745" y2="97.5" stroke="#474747" stroke-width="1"/>
<path d="M470.6,106.5 C472.5,102.2 478.5,102.2 480.4,106.5 C478.5,110.8 472.5,110.8 470.6,106.5 Z" fill="#e8e8e8"/><circle cx="475.5" cy="106.5" r="2.15" fill="#484848"/>
<line x1="486.5" y1="98" x2="486.5" y2="512" stroke="#4a4a4a" stroke-width="1"/>
<path d="M488.3,104 L491.5,107.6 L494.7,104" fill="none" stroke="#bdbdbd" stroke-width="0.95"/>
<path d="M497,102 h4 l1,1.2 h5.6 v6.8 h-10.6 z" fill="#e2e2e2"/><path d="M497.6,105.3 h9.4" stroke="#6a6a6a" stroke-width="0.7"/>
<text x="516.5" y="109.5" class="t" font-size="7.5" letter-spacing="-0.15" fill="#eee" color="#eee">Group 1</text>
<line x1="464" y1="114.4" x2="734" y2="114.4" stroke="#484848" stroke-width="1"/>
<path d="M470.6,128.7 C472.5,124.39999999999999 478.5,124.39999999999999 480.4,128.7 C478.5,133.0 472.5,133.0 470.6,128.7 Z" fill="#e8e8e8"/><circle cx="475.5" cy="128.7" r="2.15" fill="#484848"/>
<pattern id="tc0" x="501" y="117.5" width="5.7" height="5.7" patternUnits="userSpaceOnUse"><rect width="5.7" height="5.7" fill="#fff"/><rect x="2.85" width="2.85" height="2.85" fill="#d2d2d2"/><rect y="2.85" width="2.85" height="2.85" fill="#d2d2d2"/></pattern>
<rect x="500.5" y="117.0" width="18" height="22.5" fill="url(#tc0)" stroke="#2e2e2e" stroke-width="0.9"/>
<text x="525.8" y="132.0" class="t" font-size="7.5" letter-spacing="-0.3" word-spacing="0.5" fill="#ececec" color="#ececec">Layer 7</text>
<line x1="464" y1="142.28" x2="734" y2="142.28" stroke="#484848" stroke-width="1"/>
<path d="M470.6,156.57999999999998 C472.5,152.27999999999997 478.5,152.27999999999997 480.4,156.57999999999998 C478.5,160.88 472.5,160.88 470.6,156.57999999999998 Z" fill="#e8e8e8"/><circle cx="475.5" cy="156.57999999999998" r="2.15" fill="#484848"/>
<pattern id="tc1" x="501" y="145.38" width="5.7" height="5.7" patternUnits="userSpaceOnUse"><rect width="5.7" height="5.7" fill="#fff"/><rect x="2.85" width="2.85" height="2.85" fill="#d2d2d2"/><rect y="2.85" width="2.85" height="2.85" fill="#d2d2d2"/></pattern>
<rect x="500.5" y="144.88" width="18" height="22.5" fill="url(#tc1)" stroke="#2e2e2e" stroke-width="0.9"/>
<text x="525.8" y="159.88" class="t" font-size="7.5" letter-spacing="-0.3" word-spacing="0.5" fill="#ececec" color="#ececec">Layer 15</text>
<line x1="464" y1="170.16" x2="734" y2="170.16" stroke="#484848" stroke-width="1"/>
<path d="M470.6,184.45999999999998 C472.5,180.15999999999997 478.5,180.15999999999997 480.4,184.45999999999998 C478.5,188.76 472.5,188.76 470.6,184.45999999999998 Z" fill="#e8e8e8"/><circle cx="475.5" cy="184.45999999999998" r="2.15" fill="#484848"/>
<pattern id="tc2" x="501" y="173.26" width="5.7" height="5.7" patternUnits="userSpaceOnUse"><rect width="5.7" height="5.7" fill="#fff"/><rect x="2.85" width="2.85" height="2.85" fill="#d2d2d2"/><rect y="2.85" width="2.85" height="2.85" fill="#d2d2d2"/></pattern>
<rect x="500.5" y="172.76" width="18" height="22.5" fill="url(#tc2)" stroke="#2e2e2e" stroke-width="0.9"/>
<text x="525.8" y="187.76" class="t" font-size="7.5" letter-spacing="-0.3" word-spacing="0.5" fill="#ececec" color="#ececec">Layer 14</text>
<line x1="464" y1="198.04" x2="734" y2="198.04" stroke="#484848" stroke-width="1"/>
<path d="M470.6,212.33999999999997 C472.5,208.03999999999996 478.5,208.03999999999996 480.4,212.33999999999997 C478.5,216.64 472.5,216.64 470.6,212.33999999999997 Z" fill="#e8e8e8"/><circle cx="475.5" cy="212.33999999999997" r="2.15" fill="#484848"/>
<pattern id="tc3" x="501" y="201.14" width="5.7" height="5.7" patternUnits="userSpaceOnUse"><rect width="5.7" height="5.7" fill="#fff"/><rect x="2.85" width="2.85" height="2.85" fill="#d2d2d2"/><rect y="2.85" width="2.85" height="2.85" fill="#d2d2d2"/></pattern>
<rect x="500.5" y="200.64" width="18" height="22.5" fill="url(#tc3)" stroke="#2e2e2e" stroke-width="0.9"/>
<ellipse cx="510.5" cy="204.94" rx="1" ry="0.6" fill="#222"/>
<text x="525.8" y="215.64" class="t" font-size="7.5" letter-spacing="-0.3" word-spacing="0.5" fill="#ececec" color="#ececec">Layer 13</text>
<line x1="464" y1="225.92000000000002" x2="734" y2="225.92000000000002" stroke="#484848" stroke-width="1"/>
<path d="M470.6,240.22 C472.5,235.92 478.5,235.92 480.4,240.22 C478.5,244.52 472.5,244.52 470.6,240.22 Z" fill="#e8e8e8"/><circle cx="475.5" cy="240.22" r="2.15" fill="#484848"/>
<pattern id="tc4" x="501" y="229.02" width="5.7" height="5.7" patternUnits="userSpaceOnUse"><rect width="5.7" height="5.7" fill="#fff"/><rect x="2.85" width="2.85" height="2.85" fill="#d2d2d2"/><rect y="2.85" width="2.85" height="2.85" fill="#d2d2d2"/></pattern>
<rect x="500.5" y="228.52" width="18" height="22.5" fill="url(#tc4)" stroke="#2e2e2e" stroke-width="0.9"/>
<text x="525.8" y="243.52" class="t" font-size="7.5" letter-spacing="-0.3" word-spacing="0.5" fill="#ececec" color="#ececec">Layer 11</text>
<line x1="464" y1="253.8" x2="734" y2="253.8" stroke="#484848" stroke-width="1"/>
<path d="M470.6,268.1 C472.5,263.8 478.5,263.8 480.4,268.1 C478.5,272.40000000000003 472.5,272.40000000000003 470.6,268.1 Z" fill="#e8e8e8"/><circle cx="475.5" cy="268.1" r="2.15" fill="#484848"/>
<pattern id="tc5" x="501" y="256.9" width="5.7" height="5.7" patternUnits="userSpaceOnUse"><rect width="5.7" height="5.7" fill="#fff"/><rect x="2.85" width="2.85" height="2.85" fill="#d2d2d2"/><rect y="2.85" width="2.85" height="2.85" fill="#d2d2d2"/></pattern>
<rect x="500.5" y="256.4" width="18" height="22.5" fill="url(#tc5)" stroke="#2e2e2e" stroke-width="0.9"/>
<text x="525.8" y="271.4" class="t" font-size="7.5" letter-spacing="-0.3" word-spacing="0.5" fill="#ececec" color="#ececec">Layer 6</text>
<line x1="464" y1="281.67999999999995" x2="734" y2="281.67999999999995" stroke="#484848" stroke-width="1"/>
<path d="M470.6,295.97999999999996 C472.5,291.67999999999995 478.5,291.67999999999995 480.4,295.97999999999996 C478.5,300.28 472.5,300.28 470.6,295.97999999999996 Z" fill="#e8e8e8"/><circle cx="475.5" cy="295.97999999999996" r="2.15" fill="#484848"/>
<pattern id="tc6" x="501" y="284.78" width="5.7" height="5.7" patternUnits="userSpaceOnUse"><rect width="5.7" height="5.7" fill="#fff"/><rect x="2.85" width="2.85" height="2.85" fill="#d2d2d2"/><rect y="2.85" width="2.85" height="2.85" fill="#d2d2d2"/></pattern>
<rect x="500.5" y="284.28" width="18" height="22.5" fill="url(#tc6)" stroke="#2e2e2e" stroke-width="0.9"/>
<text x="525.8" y="299.28" class="t" font-size="7.5" letter-spacing="-0.3" word-spacing="0.5" fill="#ececec" color="#ececec">Layer 10</text>
<line x1="464" y1="309.56" x2="734" y2="309.56" stroke="#484848" stroke-width="1"/>
<path d="M470.6,323.86 C472.5,319.56 478.5,319.56 480.4,323.86 C478.5,328.16 472.5,328.16 470.6,323.86 Z" fill="#e8e8e8"/><circle cx="475.5" cy="323.86" r="2.15" fill="#484848"/>
<pattern id="tc7" x="501" y="312.66" width="5.7" height="5.7" patternUnits="userSpaceOnUse"><rect width="5.7" height="5.7" fill="#fff"/><rect x="2.85" width="2.85" height="2.85" fill="#d2d2d2"/><rect y="2.85" width="2.85" height="2.85" fill="#d2d2d2"/></pattern>
<rect x="500.5" y="312.16" width="18" height="22.5" fill="url(#tc7)" stroke="#2e2e2e" stroke-width="0.9"/>
<ellipse cx="510.6" cy="316.56" rx="1.1" ry="0.9" fill="#111"/>
<text x="525.8" y="327.16" class="t" font-size="7.5" letter-spacing="-0.3" word-spacing="0.5" fill="#ececec" color="#ececec">Layer 9</text>
<line x1="464" y1="337.44" x2="734" y2="337.44" stroke="#484848" stroke-width="1"/>
<path d="M470.6,351.74 C472.5,347.44 478.5,347.44 480.4,351.74 C478.5,356.04 472.5,356.04 470.6,351.74 Z" fill="#e8e8e8"/><circle cx="475.5" cy="351.74" r="2.15" fill="#484848"/>
<pattern id="tc8" x="501" y="340.54" width="5.7" height="5.7" patternUnits="userSpaceOnUse"><rect width="5.7" height="5.7" fill="#fff"/><rect x="2.85" width="2.85" height="2.85" fill="#d2d2d2"/><rect y="2.85" width="2.85" height="2.85" fill="#d2d2d2"/></pattern>
<rect x="500.5" y="340.04" width="18" height="22.5" fill="url(#tc8)" stroke="#2e2e2e" stroke-width="0.9"/>
<ellipse cx="507.5" cy="344.04" rx="1.1" ry="0.9" fill="#111"/>
<text x="525.8" y="355.04" class="t" font-size="7.5" letter-spacing="-0.3" word-spacing="0.5" fill="#ececec" color="#ececec">Layer 5</text>
<line x1="464" y1="365.32" x2="734" y2="365.32" stroke="#484848" stroke-width="1"/>
<path d="M470.6,379.62 C472.5,375.32 478.5,375.32 480.4,379.62 C478.5,383.92 472.5,383.92 470.6,379.62 Z" fill="#e8e8e8"/><circle cx="475.5" cy="379.62" r="2.15" fill="#484848"/>
<pattern id="tc9" x="501" y="368.42" width="5.7" height="5.7" patternUnits="userSpaceOnUse"><rect width="5.7" height="5.7" fill="#fff"/><rect x="2.85" width="2.85" height="2.85" fill="#d2d2d2"/><rect y="2.85" width="2.85" height="2.85" fill="#d2d2d2"/></pattern>
<rect x="500.5" y="367.92" width="18" height="22.5" fill="url(#tc9)" stroke="#2e2e2e" stroke-width="0.9"/>
<circle cx="509.4" cy="371.12" r="3.6" fill="#c0306b"/><circle cx="509.4" cy="372.32" r="3.1" fill="#efbea6"/>
<text x="525.8" y="382.92" class="t" font-size="7.5" letter-spacing="-0.3" word-spacing="0.5" fill="#ececec" color="#ececec">Layer 2</text>
<rect x="487" y="392.6" width="247" height="27.2" fill="#6a6a6a"/>
<line x1="464" y1="393.2" x2="734" y2="393.2" stroke="#484848" stroke-width="1"/>
<path d="M470.6,407.5 C472.5,403.2 478.5,403.2 480.4,407.5 C478.5,411.8 472.5,411.8 470.6,407.5 Z" fill="#e8e8e8"/><circle cx="475.5" cy="407.5" r="2.15" fill="#484848"/>
<pattern id="tc10" x="501" y="396.3" width="5.7" height="5.7" patternUnits="userSpaceOnUse"><rect width="5.7" height="5.7" fill="#fff"/><rect x="2.85" width="2.85" height="2.85" fill="#d2d2d2"/><rect y="2.85" width="2.85" height="2.85" fill="#d2d2d2"/></pattern>
<rect x="500.5" y="395.8" width="18" height="22.5" fill="url(#tc10)" stroke="#2e2e2e" stroke-width="0.9"/>
<rect x="508.6" y="405.40000000000003" width="1.4" height="3" fill="#9cd1ec"/><path d="M508.2,408.40000000000003 h2.2 l0.5,2 h-3.2 z" fill="#509cbd"/><rect x="508.5" y="410.40000000000003" width="1.8" height="2.6" fill="#efbea6"/>
<path d="M499.3,399.6 V393.6 H505.8" fill="none" stroke="#e2e2e2" stroke-width="1.3"/>
<path d="M520,399.6 V393.6 H513.5" fill="none" stroke="#e2e2e2" stroke-width="1.3"/>
<path d="M499.3,413.40000000000003 V419.40000000000003 H505.8" fill="none" stroke="#e2e2e2" stroke-width="1.3"/>
<path d="M520,413.40000000000003 V419.40000000000003 H513.5" fill="none" stroke="#e2e2e2" stroke-width="1.3"/>
<text x="525.8" y="410.8" class="t" font-size="7.5" letter-spacing="-0.3" word-spacing="0.5" fill="#ececec" color="#ececec">Layer 18</text>
<line x1="464" y1="421.08" x2="734" y2="421.08" stroke="#484848" stroke-width="1"/>
<path d="M470.6,435.38 C472.5,431.08 478.5,431.08 480.4,435.38 C478.5,439.68 472.5,439.68 470.6,435.38 Z" fill="#e8e8e8"/><circle cx="475.5" cy="435.38" r="2.15" fill="#484848"/>
<pattern id="tc11" x="501" y="424.18" width="5.7" height="5.7" patternUnits="userSpaceOnUse"><rect width="5.7" height="5.7" fill="#fff"/><rect x="2.85" width="2.85" height="2.85" fill="#d2d2d2"/><rect y="2.85" width="2.85" height="2.85" fill="#d2d2d2"/></pattern>
<rect x="500.5" y="423.68" width="18" height="22.5" fill="url(#tc11)" stroke="#2e2e2e" stroke-width="0.9"/>
<path d="M510.2,431.28000000000003 L512.6,435.88" stroke="#f0b898" stroke-width="0.8"/>
<text x="525.8" y="438.68" class="t" font-size="7.5" letter-spacing="-0.3" word-spacing="0.5" fill="#ececec" color="#ececec">Layer 19</text>
<line x1="464" y1="448.96" x2="734" y2="448.96" stroke="#484848" stroke-width="1"/>
<path d="M470.6,463.26 C472.5,458.96 478.5,458.96 480.4,463.26 C478.5,467.56 472.5,467.56 470.6,463.26 Z" fill="#e8e8e8"/><circle cx="475.5" cy="463.26" r="2.15" fill="#484848"/>
<pattern id="tc12" x="501" y="452.06" width="5.7" height="5.7" patternUnits="userSpaceOnUse"><rect width="5.7" height="5.7" fill="#fff"/><rect x="2.85" width="2.85" height="2.85" fill="#d2d2d2"/><rect y="2.85" width="2.85" height="2.85" fill="#d2d2d2"/></pattern>
<rect x="500.5" y="451.56" width="18" height="22.5" fill="url(#tc12)" stroke="#2e2e2e" stroke-width="0.9"/>
<path d="M508.8,459.36 L505.6,463.36" stroke="#f0b898" stroke-width="0.8"/>
<text x="525.8" y="466.56" class="t" font-size="7.5" letter-spacing="-0.3" word-spacing="0.5" fill="#ececec" color="#ececec">Layer 20</text>
<line x1="464" y1="476.84" x2="734" y2="476.84" stroke="#484848" stroke-width="1"/>
<path d="M470.6,491.14 C472.5,486.84 478.5,486.84 480.4,491.14 C478.5,495.44 472.5,495.44 470.6,491.14 Z" fill="#e8e8e8"/><circle cx="475.5" cy="491.14" r="2.15" fill="#484848"/>
<pattern id="tc13" x="501" y="479.94" width="5.7" height="5.7" patternUnits="userSpaceOnUse"><rect width="5.7" height="5.7" fill="#fff"/><rect x="2.85" width="2.85" height="2.85" fill="#d2d2d2"/><rect y="2.85" width="2.85" height="2.85" fill="#d2d2d2"/></pattern>
<rect x="500.5" y="479.44" width="18" height="22.5" fill="url(#tc13)" stroke="#2e2e2e" stroke-width="0.9"/>
<ellipse cx="506.5" cy="487.44" rx="1.2" ry="0.8" fill="#c0306b" transform="rotate(-30 506.5 487.44)"/>
<text x="525.8" y="494.44" class="t" font-size="7.5" letter-spacing="-0.3" word-spacing="0.5" fill="#ececec" color="#ececec">Layer 17</text>
<line x1="464" y1="504.71999999999997" x2="734" y2="504.71999999999997" stroke="#484848" stroke-width="1"/>
<path d="M470.6,519.02 C472.5,514.72 478.5,514.72 480.4,519.02 C478.5,523.3199999999999 472.5,523.3199999999999 470.6,519.02 Z" fill="#e8e8e8"/><circle cx="475.5" cy="519.02" r="2.15" fill="#484848"/>
<pattern id="tc14" x="501" y="507.82" width="5.7" height="5.7" patternUnits="userSpaceOnUse"><rect width="5.7" height="5.7" fill="#fff"/><rect x="2.85" width="2.85" height="2.85" fill="#d2d2d2"/><rect y="2.85" width="2.85" height="2.85" fill="#d2d2d2"/></pattern>
<rect x="500.5" y="507.32" width="18" height="22.5" fill="url(#tc14)" stroke="#2e2e2e" stroke-width="0.9"/>
<circle cx="477.2" cy="47.4" r="2.5" fill="none" stroke="#e0e0e0" stroke-width="1.1"/><line x1="475.4" y1="49.2" x2="473.2" y2="51.4" stroke="#e0e0e0" stroke-width="1.3" stroke-linecap="round"/>
<rect x="539.6" y="45.2" width="7.8" height="6.4" fill="none" stroke="#d8d8d8" stroke-width="1"/><path d="M541,50.2 l1.3,-1.8 l1,1.2 l1,-1 l1.4,1.6 z" fill="#d8d8d8"/>
<circle cx="560.5" cy="48.5" r="3.3" fill="none" stroke="#d8d8d8" stroke-width="1.1"/><path d="M562.8,46.2 A3.3,3.3 0 0 1 558.2,50.8 Z" fill="#d8d8d8"/>
<path d="M574.6,45.4 h7.2 v2 h-0.9 v-0.8 h-1.9 v4.6 h1 v0.9 h-3.6 v-0.9 h1 v-4.6 h-1.9 v0.8 h-0.9 z" fill="#d8d8d8"/>
<rect x="592" y="45.3" width="6" height="6.4" fill="none" stroke="#d8d8d8" stroke-width="1"/><rect x="591" y="44.3" width="2" height="2" fill="#d8d8d8"/><rect x="597" y="44.3" width="2" height="2" fill="#d8d8d8"/><rect x="591" y="50.7" width="2" height="2" fill="#d8d8d8"/><rect x="597" y="50.7" width="2" height="2" fill="#d8d8d8"/>
<path d="M611.5,45.2 h2.5 l2,2 v5.6 h-4.5 z" fill="none" stroke="#d8d8d8" stroke-width="0.9"/><rect x="609.2" y="48.8" width="4.2" height="4.2" fill="#d8d8d8"/>
<rect x="625.8" y="42.5" width="7" height="12.8" rx="3.5" fill="#3d3d3d"/><circle cx="629.3" cy="45.6" r="2.9" fill="#d6d6d6"/>
<path d="M726,10.3 l-2.2,1.7 l2.2,1.7 M729,10.3 l-2.2,1.7 l2.2,1.7" fill="none" stroke="#cfcfcf" stroke-width="0.9"/>
<path d="M737,9.5 l4.2,4.6 M741.2,9.5 l-4.2,4.6" stroke="#d8d8d8" stroke-width="1.3"/>
<rect x="733.5" y="22.8" width="7.5" height="6.5" fill="#6e6e6e"/><path d="M733.5,24.9 h7.5 M733.5,27.1 h7.5" stroke="#5c5c5c" stroke-width="0.6"/>
<rect x="492.2" y="82.9" width="8.4" height="8.4" rx="0.8" fill="#e4e4e4"/><rect x="493.45" y="84.15" width="1.7" height="1.7" fill="#3c3c3c"/><rect x="497.65" y="84.15" width="1.7" height="1.7" fill="#3c3c3c"/><rect x="493.45" y="88.45" width="1.7" height="1.7" fill="#3c3c3c"/><rect x="497.65" y="88.45" width="1.7" height="1.7" fill="#3c3c3c"/><rect x="495.54999999999995" y="86.30000000000001" width="1.7" height="1.7" fill="#3c3c3c"/>
<path d="M516.4,83.8 L511.6,88.6" stroke="#dcdcdc" stroke-width="2.2" stroke-linecap="round"/><path d="M511.8,87.8 C509.8,88.2 508.6,90 508,92.4 C510.6,92 512.6,90.8 513,89.1 Z" fill="#dcdcdc"/>
<path d="M527.6,84 v6.6 M524,87.3 h7.2" stroke="#dcdcdc" stroke-width="0.9"/><path d="M527.6,82.8 l-2,2.2 h4 z M527.6,91.8 l-2,-2.2 h4 z M522.8,87.3 l2.2,-2 v4 z M532.4,87.3 l-2.2,-2 v4 z" fill="#dcdcdc"/>
<path d="M540.4,83.2 v8.6 M538.8,90.4 h10.2 M547.8,87 v4.8 M538.8,85.1 h5.8" fill="none" stroke="#d0d0d0" stroke-width="0.9"/><path d="M545.6,83.4 l3.3,3.3" stroke="#d0d0d0" stroke-width="0.9"/><path d="M541.6,86.4 h4 l1.6,1.7 l-1.6,1.6 h-4 z" fill="#bdbdbd"/>
<path d="M557.6,87.2 v-1.3 a1.8,1.8 0 0 1 3.6,0 v1.3" fill="none" stroke="#e0e0e0" stroke-width="1.1"/><rect x="556" y="87" width="7" height="5" fill="#e0e0e0"/><rect x="559" y="88.6" width="1" height="1.6" fill="#555"/>
<path d="M570.6,95.2 Q559.2,103.1 558.2,106.1 Q559.2,109.1 571.4,117.0" fill="none" stroke="#e6e6e6" stroke-width="8.299999999999999" stroke-linecap="round" stroke-linejoin="round"/><path d="M560.7,103.81 C570.57,101.91000000000001 587.02,102.10000000000001 591.32,102.48 C594.9300000000001,103.24000000000001 594.9300000000001,108.56 591.32,109.32000000000001 C587.02,109.7 570.57,109.89 560.7,107.99000000000001 Z" fill="#e6e6e6" stroke="#e6e6e6" stroke-width="1.7"/><path d="M570.6,95.2 Q559.2,103.1 558.2,106.1 Q559.2,109.1 571.4,117.0" fill="none" stroke="#981c23" stroke-width="6.6" stroke-linecap="round" stroke-linejoin="round"/><path d="M560.7,103.81 C570.57,101.91000000000001 587.02,102.10000000000001 591.32,102.48 C594.9300000000001,103.24000000000001 594.9300000000001,108.56 591.32,109.32000000000001 C587.02,109.7 570.57,109.89 560.7,107.99000000000001 Z" fill="#981c23"/><path d="M577.0,400.0 Q570.1,404.75 569.35,407 Q570.1,409.25 577.4,414.6" fill="none" stroke="#e6e6e6" stroke-width="6.1000000000000005" stroke-linecap="round" stroke-linejoin="round"/><path d="M571.225,405.9 C577.8175,404.9 588.8050000000001,405.0 592.0,405.2 C593.9000000000001,405.6 593.9000000000001,408.4 592.0,408.8 C588.8050000000001,409.0 577.8175,409.1 571.225,408.1 Z" fill="#e6e6e6" stroke="#e6e6e6" stroke-width="1.7"/><path d="M577.0,400.0 Q570.1,404.75 569.35,407 Q570.1,409.25 577.4,414.6" fill="none" stroke="#981c23" stroke-width="4.4" stroke-linecap="round" stroke-linejoin="round"/><path d="M571.225,405.9 C577.8175,404.9 588.8050000000001,405.0 592.0,405.2 C593.9000000000001,405.6 593.9000000000001,408.4 592.0,408.8 C588.8050000000001,409.0 577.8175,409.1 571.225,408.1 Z" fill="#981c23"/>
</svg>
</body></html>
